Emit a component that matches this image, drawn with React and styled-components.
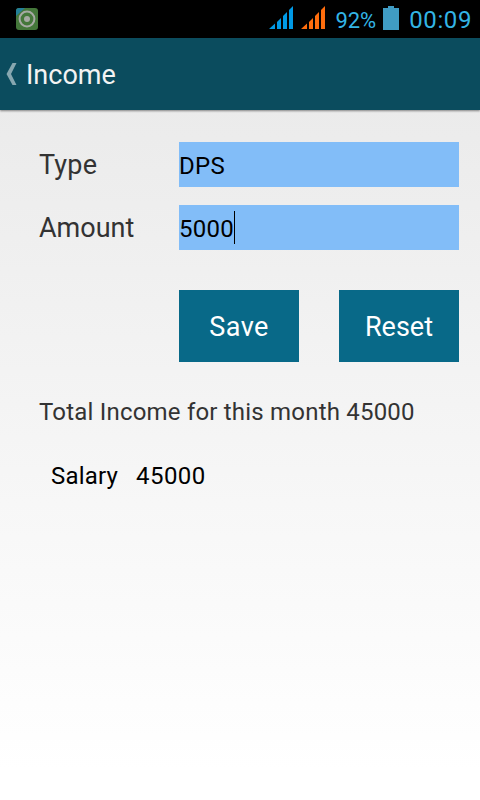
import React, { useState } from 'react'
import styled, { createGlobalStyle } from 'styled-components'

const teal = { bar: '#0b4c5e', button: '#086988' }
const holo = '#33b5e5'

const GlobalStyle = createGlobalStyle`
  * { box-sizing: border-box; }
  body {
    margin: 0;
    font-family: Roboto, 'Liberation Sans', sans-serif;
  }
`
const Screen = styled.div`
  width: 480px;
  height: 800px;
  display: flex;
  flex-direction: column;
  overflow: hidden;
  background: linear-gradient(#e9e9e9 38px, #ffffff 770px);
`
const StatusBar = styled.div`
  height: 38px;
  flex: none;
  display: flex;
  align-items: center;
  padding: 0 8px 0 16px;
  background-color: black;
  color: ${holo};
`
const Battery = styled.svg`
  margin: 0 10px 2px 7px;
`
const Signals = styled.div`
  display: flex;
  gap: 8px;
  margin: 0 10px 3px 0;
`
const Spacer = styled.div`
  flex: 1;
`
const StatusText = styled.span`
  font-size: ${props => props.$size}px;
  letter-spacing: ${props => props.$spacing || 0}px;
  line-height: 38px;
  height: 38px;
  padding-top: ${props => props.$drop}px;
`
const ActionBar = styled.header`
  height: 72px;
  flex: none;
  display: flex;
  align-items: center;
  padding-left: 6px;
  background-color: ${teal.bar};
  box-shadow: 0 1px 2px rgba(0, 0, 0, 0.45);
`
const Title = styled.h1`
  margin: 0 0 0 9px;
  padding-top: 2px;
  font-size: 27px;
  font-weight: normal;
  color: #f3f3f3;
`
const Content = styled.main`
  padding: 32px 21px 0 39px;
`
const Row = styled.div`
  display: grid;
  grid-template-columns: 140px 280px;
  align-items: center;
  height: 45px;
  margin-bottom: 18px;
`
const Label = styled.label`
  font-size: 27px;
  letter-spacing: ${props => props.$spacing || 0}px;
  color: #333333;
`
const Field = styled.div`
  height: 45px;
  display: flex;
  align-items: center;
  background-color: #82bdf8;
  font-size: 24px;
  line-height: 28px;
  letter-spacing: 0.3px;
  color: black;
`
const Value = styled.span`
  padding-top: 2px;
`
const Caret = styled.span`
  width: 1px;
  height: 33px;
  background-color: black;
`
const Buttons = styled.div`
  display: flex;
  justify-content: flex-end;
  gap: 40px;
  margin-top: 40px;
`
const Button = styled.button`
  width: 120px;
  height: 72px;
  padding: 2px 0 0;
  border: none;
  background-color: ${teal.button};
  font: 27px Roboto, 'Liberation Sans', sans-serif;
  letter-spacing: ${props => props.$spacing || 0}px;
  color: white;
`
const Total = styled.p`
  margin: 35px 0 0;
  font-size: 24px;
  line-height: 30px;
  letter-spacing: 0.2px;
  color: #333333;
`
const Entry = styled.div`
  display: flex;
  gap: 18px;
  margin: 34px 0 0 12px;
  font-size: 24px;
  line-height: 30px;
  letter-spacing: 0.2px;
  color: black;
`
const Sum = styled.span`
  letter-spacing: 0.4px;
`

const AppIcon = () => (
  <svg width="22" height="22" viewBox="0 0 22 22">
    <rect width="22" height="22" rx="3" fill="#44773a" />
    <path d="M3 0H9L0 8V3Q0 0 3 0Z" fill="#237f98" />
    <circle cx="11" cy="11" r="7.4" fill="none" stroke="#a6aaa4" strokeWidth="2" />
    <circle cx="11" cy="11" r="3" fill="#a6aaa4" />
  </svg>
)

const SignalBars = ({ color }) => (
  <svg width="24" height="23" viewBox="0 0 24 23" fill={color}>
    <path d="M0 23L6 17.500V23ZM8 23V16L12 12V23ZM14 23V10L18 6V23ZM20 23V4L24 0V23Z" />
  </svg>
)

const App = () => {
  const [type, setType] = useState('DPS')
  const [amount, setAmount] = useState('5000')

  const onReset = () => {
    setType('')
    setAmount('')
  }

  return (
    <Screen>
      <GlobalStyle />
      <StatusBar>
        <AppIcon />
        <Spacer />
        <Signals>
          <SignalBars color="#0099e5" />
          <SignalBars color="#ff6d0d" />
        </Signals>
        <StatusText $size={22} $drop={2}>92%</StatusText>
        <Battery width="16" height="24" viewBox="0 0 16 24">
          <path d="M5 0H11V2H16V24H0V2H5Z" fill="#409cc4" />
        </Battery>
        <StatusText $size={24} $spacing={0.6} $drop={1}>00:09</StatusText>
      </StatusBar>
      <ActionBar>
        <svg width="11" height="22" viewBox="0 0 11 22">
          <path d="M6.500 0H10.500L5 11L10.500 22H6.500L0.500 11Z" fill="#87a7b0" />
        </svg>
        <Title>Income</Title>
      </ActionBar>
      <Content>
        <Row>
          <Label $spacing={0.2}>Type</Label>
          <Field><Value>{type}</Value></Field>
        </Row>
        <Row>
          <Label>Amount</Label>
          <Field><Value>{amount}</Value><Caret /></Field>
        </Row>
        <Buttons>
          <Button $spacing={0.5}>Save</Button>
          <Button onClick={onReset}>Reset</Button>
        </Buttons>
        <Total>Total Income for this month 45000</Total>
        <Entry>
          <span>Salary</span>
          <Sum>45000</Sum>
        </Entry>
      </Content>
    </Screen>
  )
}

export default App
